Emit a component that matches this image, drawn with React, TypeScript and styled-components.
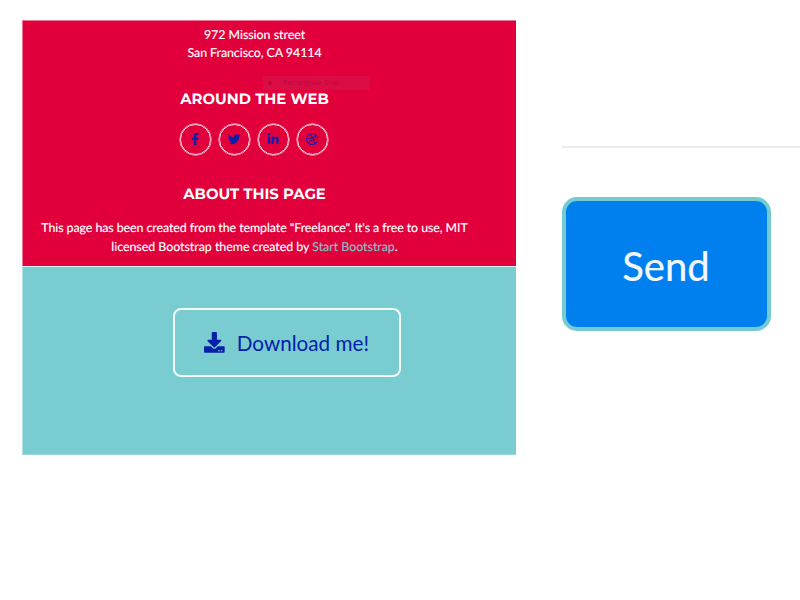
import React from "react";
import styled, { createGlobalStyle } from "styled-components";
import {
  FaFacebookF,
  FaTwitter,
  FaLinkedinIn,
  FaDribbble,
  FaDownload,
} from "react-icons/fa";

const GlobalStyle = createGlobalStyle`
  *, *::before, *::after { box-sizing: border-box; }
  body { margin: 0; background: #fff; }
`;

const Page = styled.div`
  display: flex;
  align-items: flex-start;
  width: 800px;
  height: 600px;
  overflow: hidden;
  padding: 20px 0 0 22px;
  gap: 46px;
  background: #fff;
  font-family: Lato, sans-serif;
  text-rendering: geometricPrecision;
`;

const Preview = styled.section`
  width: 494px;
  flex: none;
`;

const Footer = styled.footer`
  position: relative;
  display: flex;
  flex-direction: column;
  align-items: center;
  height: 246px;
  padding: 5px 30px 0 0;
  background: #e1003c;
  border-top: 1px solid #ee7593;
  border-left: 1px solid #ee7593;
  color: #fff;
`;

const Copy = styled.p<{ $gap?: number }>`
  margin: ${(p) => p.$gap ?? 0}px 0 0;
  font-size: 12.4px;
  line-height: 18.4px;
  text-align: center;
  white-space: nowrap;
  -webkit-text-stroke: 0.15px currentColor;
`;

const Line = styled.span<{ $tracking: number }>`
  display: block;
  letter-spacing: ${(p) => p.$tracking}px;
`;

const Heading = styled.h4<{ $gap: number }>`
  margin: ${(p) => p.$gap}px 0 0;
  font-family: Montserrat, Inter, sans-serif;
  font-size: 14.85px;
  font-weight: 700;
  line-height: 18px;
  white-space: nowrap;
`;

const SocialRow = styled.nav`
  display: flex;
  gap: 8px;
  margin: 15.5px 1px 0 0;
`;

const SocialLink = styled.a`
  display: flex;
  align-items: center;
  justify-content: center;
  width: 31px;
  height: 31px;
  border: 1px solid #fbdde5;
  border-radius: 50%;
  box-shadow: 0 0 0 0.5px #fbdde5;
  color: #0a1fac;
  font-size: 12.4px;
`;

const TextLink = styled.a`
  color: #86c0c5;
`;

const SnipGhost = styled.div`
  position: absolute;
  top: 55px;
  left: 240px;
  display: flex;
  align-items: center;
  width: 107px;
  height: 14px;
  padding-left: 5px;
  gap: 11px;
  background: #db0d47;
  color: #bd0637;
  font: 7.1px/14px "Open Sans", sans-serif;
`;

const GhostDot = styled.span`
  width: 4px;
  height: 4px;
  border-radius: 50%;
  background: #c4002f;
`;

const DownloadBand = styled.div`
  display: flex;
  align-items: flex-start;
  justify-content: center;
  height: 189px;
  padding: 41px 0 0 34px;
  background: #79cdd1;
  border-top: 1px solid #e6f3f4;
  border-left: 1px solid #b4e2e4;
  border-bottom: 1px solid #9bd9dc;
`;

const DownloadButton = styled.button`
  display: flex;
  align-items: center;
  justify-content: center;
  gap: 12px;
  width: 228px;
  height: 69px;
  padding: 0;
  border: 2px solid #f2fafa;
  border-radius: 8px;
  background: transparent;
  color: #0620a8;
  font: 20.7px/30px Lato, sans-serif;
  white-space: nowrap;
`;

const FormEnd = styled.section`
  flex: 1;
  padding-top: 126px;
`;

const Rule = styled.hr`
  margin: 0;
  border: 0;
  height: 2px;
  background: #ebeef0;
`;

const SendButton = styled.button`
  display: block;
  width: 209px;
  height: 134px;
  margin-top: 49px;
  padding: 4px 1px 0 0;
  border: 4px solid #76cbd0;
  border-radius: 15px;
  background: #0080ef;
  color: #f4f8fd;
  font: 40px/48px Lato, sans-serif;
  -webkit-text-stroke: 0.2px currentColor;
`;

export default function App() {
  return (
    <Page>
      <GlobalStyle />
      <Preview>
        <Footer>
          <Copy>
            <Line $tracking={-0.02}>972 Mission street</Line>
            <Line $tracking={-0.05}>San Francisco, CA 94114</Line>
          </Copy>
          <SnipGhost>
            <GhostDot />
            Rectangular Snip
          </SnipGhost>
          <Heading $gap={27.4}>AROUND THE WEB</Heading>
          <SocialRow>
            <SocialLink><FaFacebookF /></SocialLink>
            <SocialLink><FaTwitter /></SocialLink>
            <SocialLink><FaLinkedinIn /></SocialLink>
            <SocialLink><FaDribbble /></SocialLink>
          </SocialRow>
          <Heading $gap={30.3}>ABOUT THIS PAGE</Heading>
          <Copy $gap={16.4}>
            <Line $tracking={-0.072}>
              This page has been created from the template "Freelance". It's a free to use, MIT
            </Line>
            <Line $tracking={-0.02}>
              licensed Bootstrap theme created by <TextLink>Start Bootstrap</TextLink>.
            </Line>
          </Copy>
        </Footer>
        <DownloadBand>
          <DownloadButton>
            <FaDownload />
            Download me!
          </DownloadButton>
        </DownloadBand>
      </Preview>
      <FormEnd>
        <Rule />
        <SendButton>Send</SendButton>
      </FormEnd>
    </Page>
  );
}
